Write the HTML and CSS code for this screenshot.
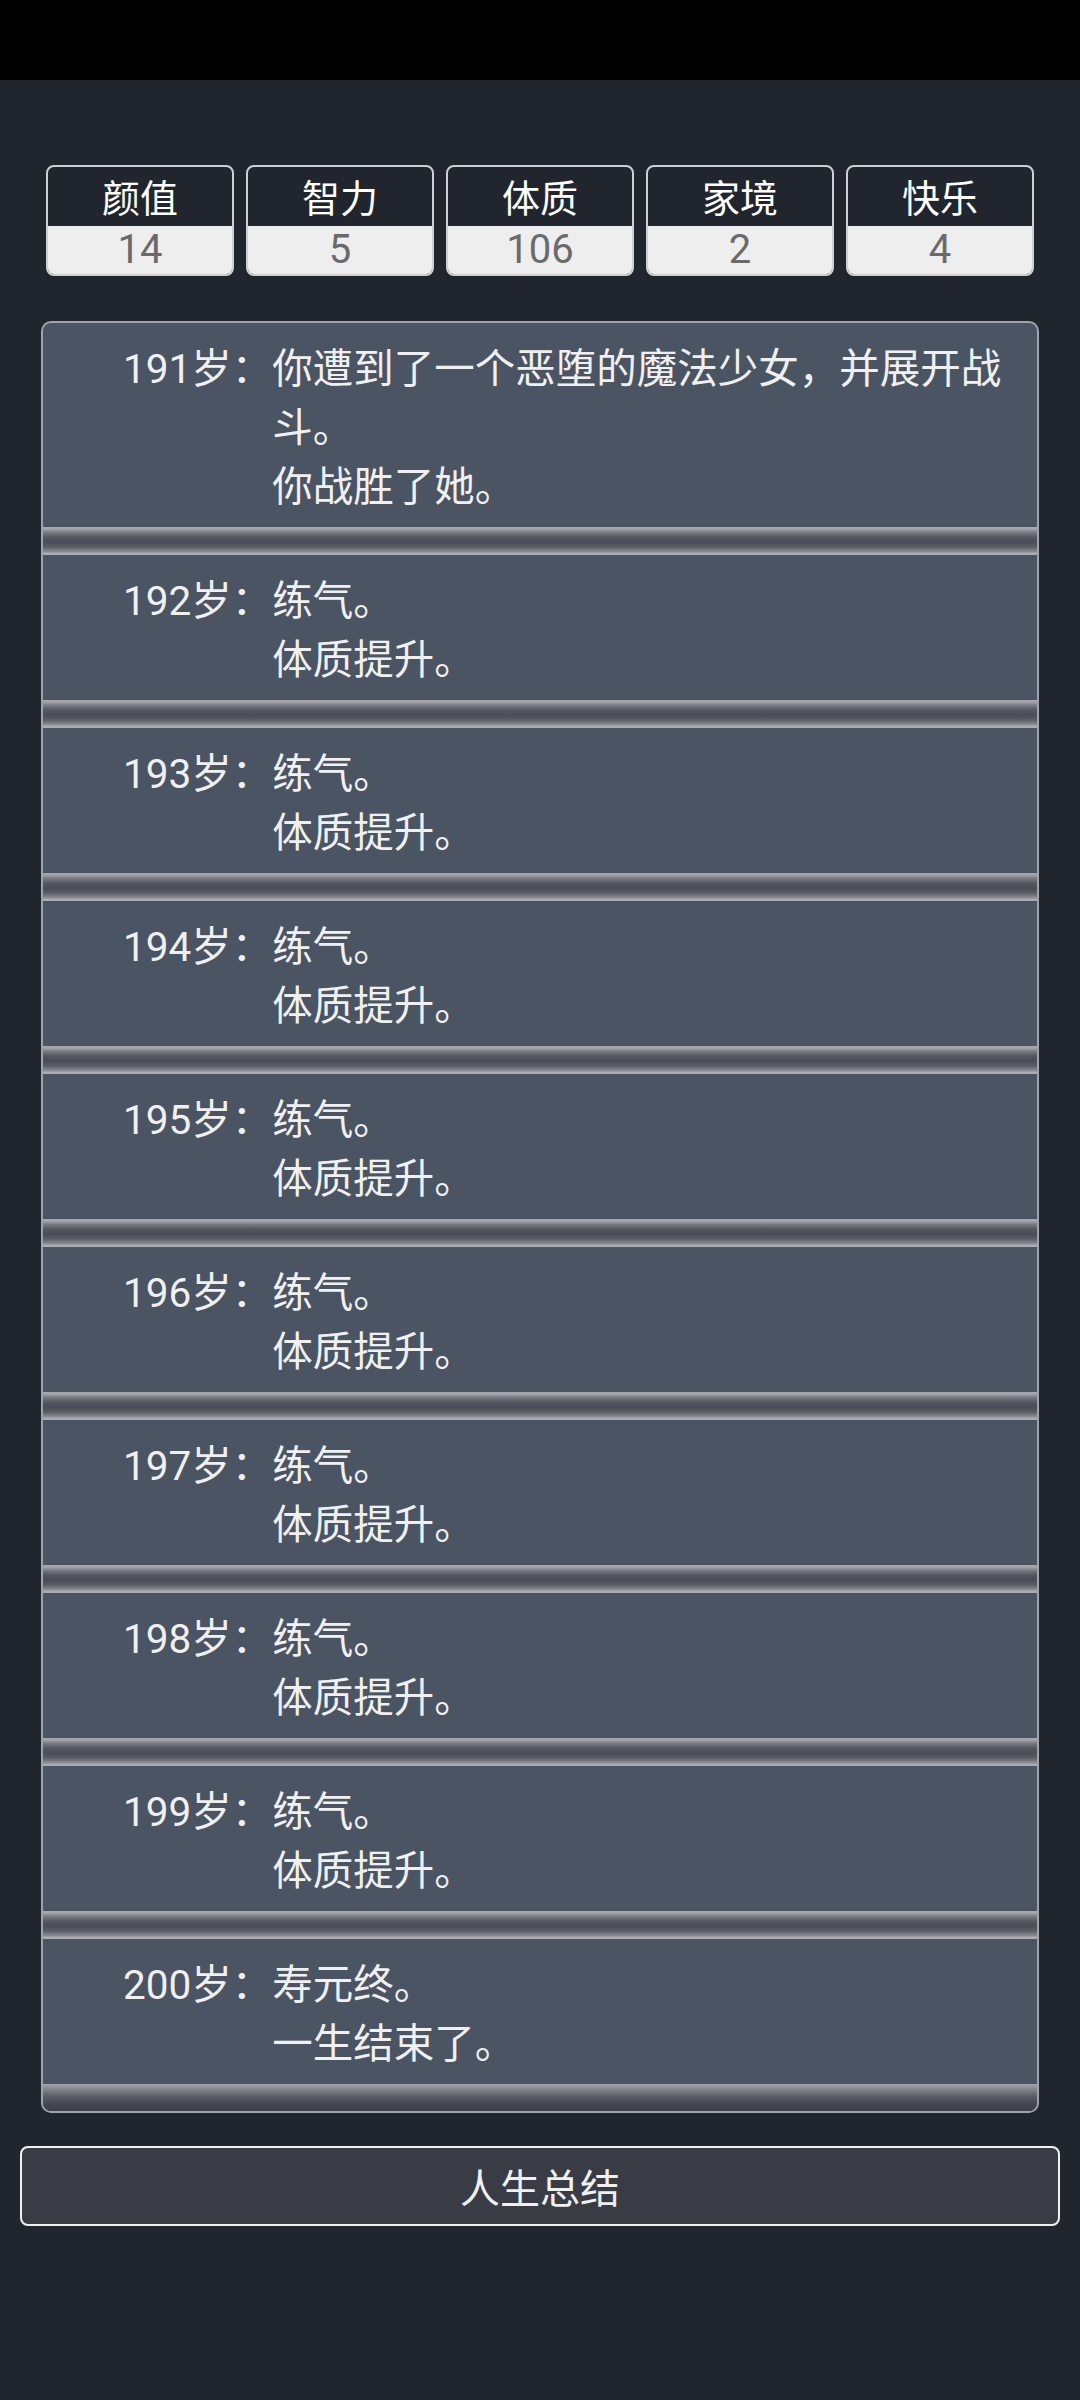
FILE: index.html
```html
<!DOCTYPE html>
<html lang="zh-CN">
<head>
  <meta charset="UTF-8">
  <meta name="viewport" content="width=device-width, initial-scale=1.0">
  <title>人生重开模拟器</title>
  <link rel="stylesheet" href="styles.css">
</head>
<body>
  <div class="statusbar"></div>
  <div class="page">
    <ul class="props">
      <li><span class="name">颜值</span><span class="value">14</span></li>
      <li><span class="name">智力</span><span class="value">5</span></li>
      <li><span class="name">体质</span><span class="value">106</span></li>
      <li><span class="name">家境</span><span class="value">2</span></li>
      <li><span class="name">快乐</span><span class="value">4</span></li>
    </ul>

    <ul class="trajectory">
      <li>
        <span class="age">191岁：</span>
        <span class="event">你遭到了一个恶堕的魔法少女，并展开战斗。<br>你战胜了她。</span>
      </li>
      <li>
        <span class="age">192岁：</span>
        <span class="event">练气。<br>体质提升。</span>
      </li>
      <li>
        <span class="age">193岁：</span>
        <span class="event">练气。<br>体质提升。</span>
      </li>
      <li>
        <span class="age">194岁：</span>
        <span class="event">练气。<br>体质提升。</span>
      </li>
      <li>
        <span class="age">195岁：</span>
        <span class="event">练气。<br>体质提升。</span>
      </li>
      <li>
        <span class="age">196岁：</span>
        <span class="event">练气。<br>体质提升。</span>
      </li>
      <li>
        <span class="age">197岁：</span>
        <span class="event">练气。<br>体质提升。</span>
      </li>
      <li>
        <span class="age">198岁：</span>
        <span class="event">练气。<br>体质提升。</span>
      </li>
      <li>
        <span class="age">199岁：</span>
        <span class="event">练气。<br>体质提升。</span>
      </li>
      <li>
        <span class="age">200岁：</span>
        <span class="event">寿元终。<br>一生结束了。</span>
      </li>
    </ul>

    <button class="summary">人生总结</button>
  </div>
</body>
</html>
```

FILE: styles.css
```css
* {
  margin: 0;
  padding: 0;
  box-sizing: border-box;
}
body {
  background-color: #21262e;
  font-family: Roboto, "Noto Sans CJK SC", sans-serif;
  color: #f0f0f0;
  width: 1080px;
  height: 2400px;
  overflow: hidden;
}
ul {
  list-style: none;
}
.statusbar {
  height: 80px;
  background-color: #000;
}
.page {
  padding-top: 85px;
}
.props {
  display: flex;
  gap: 12px;
  padding: 0 46px;
}
.props li {
  flex: 1;
  display: flex;
  flex-direction: column;
  border: 2px solid #cfd0d3;
  border-radius: 8px;
  overflow: hidden;
  text-align: center;
}
.props .name {
  height: 59px;
  line-height: 65px;
  font-size: 38px;
  color: #fff;
}
.props .value {
  height: 48px;
  line-height: 48px;
  font-size: 40px;
  background-color: #eeeeee;
  color: #6a6a6a;
}
.trajectory {
  margin: 45px 41px 0 41px;
  height: 1792px;
  border: 2px solid #9fa3aa;
  border-radius: 10px;
  background-color: #4b5462;
  overflow: hidden;
}
.trajectory li {
  display: flex;
  padding: 17px 14px 38px 80px;
  font-size: 40.5px;
  line-height: 59px;
  background-image: linear-gradient(to bottom,
    #a3a6ac 0px, #a3a6ac 2px,
    #7b7e85 5px, #55585f 10px, #4a4d55 15px,
    #5b5e65 20px, #8d9096 25px, #a8abb1 26px, #a8abb1 28px);
  background-repeat: no-repeat;
  background-position: left bottom;
  background-size: 100% 28px;
}
.trajectory li:last-child {
  background-image: linear-gradient(to bottom,
    #a3a6ac 0px, #8a8d94 4px, #5c5f66 12px, #44474f 20px, #3c3f47 28px);
}
.trajectory .age {
  white-space: nowrap;
}
.trajectory .event {
  flex: 1;
}
.summary {
  display: block;
  width: 1040px;
  height: 80px;
  margin: 33px auto 0 auto;
  border: 2px solid #f0f0f0;
  border-radius: 8px;
  background-color: #393c45;
  color: #f0f0f0;
  font-family: Roboto, "Noto Sans CJK SC", sans-serif;
  font-size: 40px;
}
```
